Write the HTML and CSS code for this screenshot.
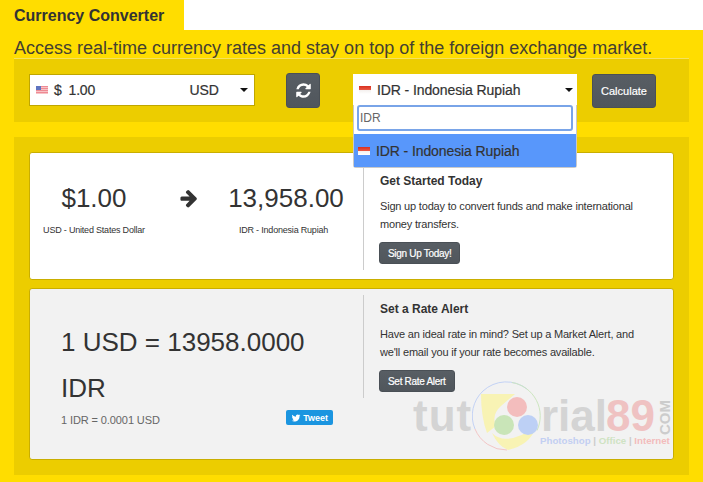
FILE: index.html
```html
<html>
<head>
<title>Currency Converter</title>
<meta name="viewport" content="width=device-width, initial-scale=1">
<link rel="stylesheet" href="styles.css">
</head>
<body>

<div class="top">
	<div class="tab">Currency Converter</div>
	<div class="top-rest"></div>
</div>
<div class="tagline">Access real-time currency rates and stay on top of the foreign exchange market.</div>

<div class="panel form-panel">
	<div class="amount">
		<span class="flag flag-us"></span>
		<span class="dollar">$</span>
		<span class="amount-val">1.00</span>
		<span class="amount-cur">USD</span>
		<span class="caret"></span>
	</div>
	<button class="btn btn-swap" type="button">
		<svg class="ico" viewBox="0 0 1792 1792"><path d="M1639 1056q0 5-1 7-64 268-268 434.500t-478 166.500q-146 0-282.500-55t-243.500-157l-129 129q-19 19-45 19t-45-19-19-45v-448q0-26 19-45t45-19h448q26 0 45 19t19 45-19 45l-137 137q71 66 161 102t187 36q134 0 250-65t186-179q11-17 53-117 8-23 30-23h192q13 0 22.500 9.500t9.500 22.500zm25-800v448q0 26-19 45t-45 19h-448q-26 0-45-19t-19-45 19-45l138-138q-148-137-349-137-134 0-250 65t-186 179q-11 17-53 117-8 23-30 23h-199q-13 0-22.500-9.500t-9.500-22.500v-7q65-268 270-434.500t480-166.500q146 0 284 55.500t245 156.500l130-129q19-19 45-19t45 19 19 45z"/></svg>
	</button>
	<div class="select-wrap">
		<div class="select">
			<span class="flag flag-id"></span>
			<span class="select-txt">IDR - Indonesia Rupiah</span>
			<span class="caret"></span>
		</div>
		<div class="dropdown">
			<div class="search-row"><div class="search">IDR</div></div>
			<div class="option"><span class="flag flag-id"></span>IDR - Indonesia Rupiah</div>
		</div>
	</div>
	<button class="btn btn-calc" type="button">Calculate</button>
</div>

<div class="panel result-panel">
	<div class="card">
		<div class="card-left convert">
			<div class="conv-col conv-from">
				<div class="big">$1.00</div>
				<div class="small">USD - United States Dollar</div>
			</div>
			<svg class="arrow" viewBox="0 0 1792 1792"><path d="M1600 960q0 54-37 91l-651 651q-39 37-91 37-51 0-90-37l-75-75q-38-38-38-91t38-91l293-293h-704q-52 0-84.500-37.500t-32.500-90.500v-128q0-53 32.500-90.500t84.500-37.500h704l-293-294q-38-36-38-90t38-90l75-75q38-38 90-38 53 0 91 38l651 651q37 35 37 90z"/></svg>
			<div class="conv-col conv-to">
				<div class="big">13,958.00</div>
				<div class="small">IDR - Indonesia Rupiah</div>
			</div>
		</div>
		<div class="card-right">
			<h4>Get Started Today</h4>
			<p>Sign up today to convert funds and make international money transfers.</p>
			<button class="btn btn-small" type="button">Sign Up Today!</button>
		</div>
	</div>

	<div class="card card-grey">
		<div class="card-left rate">
			<div class="rate-big">1 USD = 13958.0000 IDR</div>
			<div class="rate-foot">
				<span class="rate-inv">1 IDR = 0.0001 USD</span>
				<span class="tweet">
					<svg class="tw" viewBox="0 0 1792 1792"><path d="M1684 408q-67 98-162 167 1 14 1 42 0 130-38 259.500t-115.500 248.500-184.500 210.500-258 146-323 54.500q-271 0-496-145 35 4 78 4 225 0 401-138-105-2-188-64.500t-114-159.500q33 5 61 5 43 0 85-11-112-23-185.500-111.500t-73.500-205.500v-4q68 38 146 41-66-44-105-115t-39-154q0-88 44-163 121 149 294.500 238.500t371.500 99.500q-8-38-8-74 0-134 94.500-228.500t228.500-94.500q140 0 236 102 109-21 201-76-35 109-138 173 93-10 186-50z"/></svg>Tweet</span>
			</div>
		</div>
		<div class="card-right">
			<h4>Set a Rate Alert</h4>
			<p>Have an ideal rate in mind? Set up a Market Alert, and we'll email you if your rate becomes available.</p>
			<button class="btn btn-small" type="button">Set Rate Alert</button>
		</div>

		<div class="watermark">
			<span class="wm-tut">tut</span>
			<svg class="wm-logo" viewBox="0 0 70 70">
				<path d="M11 10a34 34 0 0 1 44 -2" fill="none" stroke="#c3d2f5" stroke-width="1"/>
				<path d="M11 10a34 34 0 0 0 -8 38" fill="none" stroke="#c3d2f5" stroke-width="1"/>
				<path d="M40 1.500a34 34 0 0 1 25 48" fill="none" stroke="#cde6c0" stroke-width="1"/>
				<path d="M3 48a34 34 0 0 0 32 21" fill="none" stroke="#f3c6c6" stroke-width="1"/>
				<path d="M9 13h34l-14 12q-10 9-5 20l-9 7q-6-16-6-39z" fill="#f8f3b4"/>
				<path d="M20 52q14 14 44-6-6 18-28 23-10-4-16-17z" fill="#f8f3b4"/>
				<circle cx="45" cy="26" r="10" fill="#f3bdbd"/>
				<circle cx="32" cy="44" r="10" fill="#c9e5b8"/>
				<circle cx="56" cy="44" r="10" fill="#bdd0f5"/>
			</svg>
			<span class="wm-rial">rial</span>
			<span class="wm-89">89</span>
			<span class="wm-com">COM</span>
			<div class="wm-sub"><span class="wm-ps">Photoshop</span> <i>|</i> <span class="wm-of">Office</span> <i>|</i> <span class="wm-in">Internet</span></div>
		</div>
	</div>
</div>

</body>
</html>
```

FILE: styles.css
```css
* {
	box-sizing: border-box;
	font-family: "Liberation Sans", Arial, sans-serif;
}

body {
	margin: 0;
	padding: 0 14px 7px 14px;
	background-color: #ffdd00;
	color: #333333;
	overflow: hidden;
}

.top {
	display: flex;
	height: 30px;
	margin: 0 -14px;
}

.tab {
	width: 184px;
	padding-left: 14px;
	font-size: 16px;
	font-weight: bold;
	line-height: 31px;
}

.top-rest {
	flex: 1;
	background-color: #ffffff;
}

.tagline {
	height: 28px;
	font-size: 18px;
	line-height: 36px;
	color: #444030;
	white-space: nowrap;
}

.panel {
	background-color: #eccd00;
}

.form-panel {
	display: flex;
	align-items: flex-start;
	height: 64px;
	padding: 15px 0 0 15px;
	border-top: 1px solid #f5e25e;
}

.amount {
	display: flex;
	align-items: center;
	width: 226px;
	height: 32px;
	padding-left: 6px;
	background-color: #ffffff;
	border: 1px solid #bfa600;
	font-size: 14px;
	letter-spacing: -0.2px;
	-webkit-text-stroke: 0.2px;
}

.flag {
	display: inline-block;
	width: 12px;
	height: 8px;
	flex: none;
}

.flag-us {
	background:
		linear-gradient(#5f74c0, #5f74c0) 0 0 / 5px 4px no-repeat,
		repeating-linear-gradient(180deg, #ee8a94 0, #ee8a94 1px, #f7c3c6 1px, #f7c3c6 2px);
}

.flag-id {
	background: linear-gradient(180deg, #d9301f 0, #e95a46 50%, #f4f0ee 50%, #ffffff 100%);
}

.dollar {
	margin-left: 6px;
}

.amount-val {
	margin-left: 7px;
	width: 121px;
}

.amount-cur {
	width: 50px;
}

.caret {
	display: inline-block;
	width: 0;
	height: 0;
	border-left: 4px solid transparent;
	border-right: 4px solid transparent;
	border-top: 4px solid #111111;
}

.btn {
	border: 1px solid #4a5056;
	border-radius: 3px;
	background: linear-gradient(180deg, #585e64 0, #50565c 100%);
	color: #ffffff;
	padding: 0;
	font-size: 11px;
}

.btn-swap {
	width: 34px;
	height: 35px;
	margin: -1px 0 0 31px;
	display: flex;
	align-items: center;
	justify-content: center;
}

.ico {
	width: 17px;
	height: 17px;
	fill: #ffffff;
}

.select-wrap {
	position: relative;
	width: 224px;
	margin: 0 0 0 33px;
}

.select {
	display: flex;
	align-items: center;
	height: 31px;
	padding-left: 6px;
	background-color: #ffffff;
	font-size: 14px;
	letter-spacing: -0.1px;
	-webkit-text-stroke: 0.2px;
}

.select-txt {
	margin-left: 6px;
	width: 188px;
}

.dropdown {
	position: absolute;
	top: 31px;
	left: 0;
	width: 224px;
	background-color: #ffffff;
	border: 1px solid #c9c9c9;
	border-top: 0;
	border-radius: 0 0 3px 3px;
	z-index: 1;
}

.search-row {
	padding: 0 3px;
	height: 29px;
}

.search {
	height: 26px;
	border: 2px solid #79a4e8;
	border-radius: 3px;
	padding-left: 1px;
	font-size: 12px;
	line-height: 23px;
	color: #666666;
}

.option {
	display: flex;
	align-items: center;
	height: 33px;
	padding-left: 4px;
	background-color: #5897fb;
	font-size: 14px;
	letter-spacing: -0.1px;
	color: #333333;
	-webkit-text-stroke: 0.2px;
}

.option .flag {
	margin-right: 6px;
}

.btn-calc {
	width: 64px;
	height: 34px;
	margin: 0 0 0 15px;
	-webkit-text-stroke: 0.2px;
}

.result-panel {
	height: 338px;
	margin-top: 15px;
	padding: 15px;
}

.card {
	position: relative;
	display: flex;
	height: 128px;
	padding: 8px 0;
	background-color: #ffffff;
	border: 1px solid #c9ae00;
	border-radius: 3px;
}

.card-grey {
	height: 172px;
	margin-top: 8px;
	padding-top: 6px;
	background-color: #f2f2f2;
}

.card-left {
	width: 334px;
	border-right: 1px solid #cccccc;
}

.convert {
	display: flex;
	align-items: flex-start;
	height: 109px;
}

.conv-col {
	text-align: center;
}

.conv-from {
	width: 130px;
	margin-left: -1px;
}

.conv-to {
	width: 126px;
	margin-left: 24px;
}

.big {
	margin-top: 20px;
	font-size: 26px;
	line-height: 34px;
}

.small {
	margin-top: 8px;
	font-size: 9px;
	letter-spacing: -0.2px;
	line-height: 14px;
	white-space: nowrap;
}

.conv-to .small {
	padding-right: 5px;
}

.arrow {
	width: 20px;
	height: 20px;
	margin: 27px 0 0 20px;
	fill: #333333;
}

.card-right {
	padding: 13px 0 0 16px;
	width: 300px;
}

.card-grey .card-right {
	padding-top: 7px;
}

.card-right h4 {
	margin: 0;
	font-size: 12px;
	line-height: 14px;
	color: #333333;
}

.card-right p {
	width: 262px;
	margin: 9px 0 0 0;
	font-size: 11px;
	letter-spacing: -0.19px;
	line-height: 18px;
}

.btn-small {
	display: block;
	height: 22px;
	margin: 9px 0 0 -1px;
	padding: 0 8px;
	font-size: 10px;
	letter-spacing: -0.3px;
	-webkit-text-stroke: 0.2px;
}

.rate {
	height: 103px;
	padding-left: 31px;
}

.rate-big {
	margin-top: 24px;
	width: 270px;
	font-size: 26px;
	line-height: 46px;
}

.rate-foot {
	display: flex;
	justify-content: space-between;
	align-items: center;
	width: 272px;
	margin-top: -1px;
	font-size: 11px;
	color: #666666;
}

.rate-inv {
	letter-spacing: -0.1px;
}

.tweet {
	display: flex;
	align-items: center;
	height: 15px;
	margin-bottom: 5px;
	padding: 0 5px;
	background-color: #1b95e0;
	border-radius: 2px;
	color: #ffffff;
	font-size: 9px;
	font-weight: bold;
}

.tw {
	width: 10px;
	height: 10px;
	margin-right: 2px;
	fill: #ffffff;
}

.watermark {
	position: absolute;
	right: 0;
	bottom: 0;
	width: 262px;
	height: 78px;
	white-space: nowrap;
	font-weight: bold;
}

.wm-tut, .wm-rial, .wm-89 {
	position: absolute;
	top: 19px;
	font-size: 44px;
	line-height: 32px;
	color: #d4d4d4;
}

.wm-tut {
	left: 2px;
	letter-spacing: 1px;
}

.wm-logo {
	position: absolute;
	left: 61px;
	top: 0;
	width: 70px;
	height: 70px;
}

.wm-rial {
	left: 130px;
}

.wm-89 {
	left: 195px;
	color: #efc2c2;
}

.wm-com {
	position: absolute;
	left: 246px;
	top: 19px;
	font-size: 15px;
	line-height: 15px;
	color: #cccccc;
	writing-mode: vertical-rl;
	transform: rotate(180deg);
}

.wm-sub {
	position: absolute;
	left: 129px;
	top: 54px;
	font-size: 9.700px;
	line-height: 12px;
	color: #cccccc;
}

.wm-sub i {
	font-style: normal;
}

.wm-ps {
	color: #c3cff2;
}

.wm-of {
	color: #cfe3c3;
}

.wm-in {
	color: #f3bcbc;
}
```
